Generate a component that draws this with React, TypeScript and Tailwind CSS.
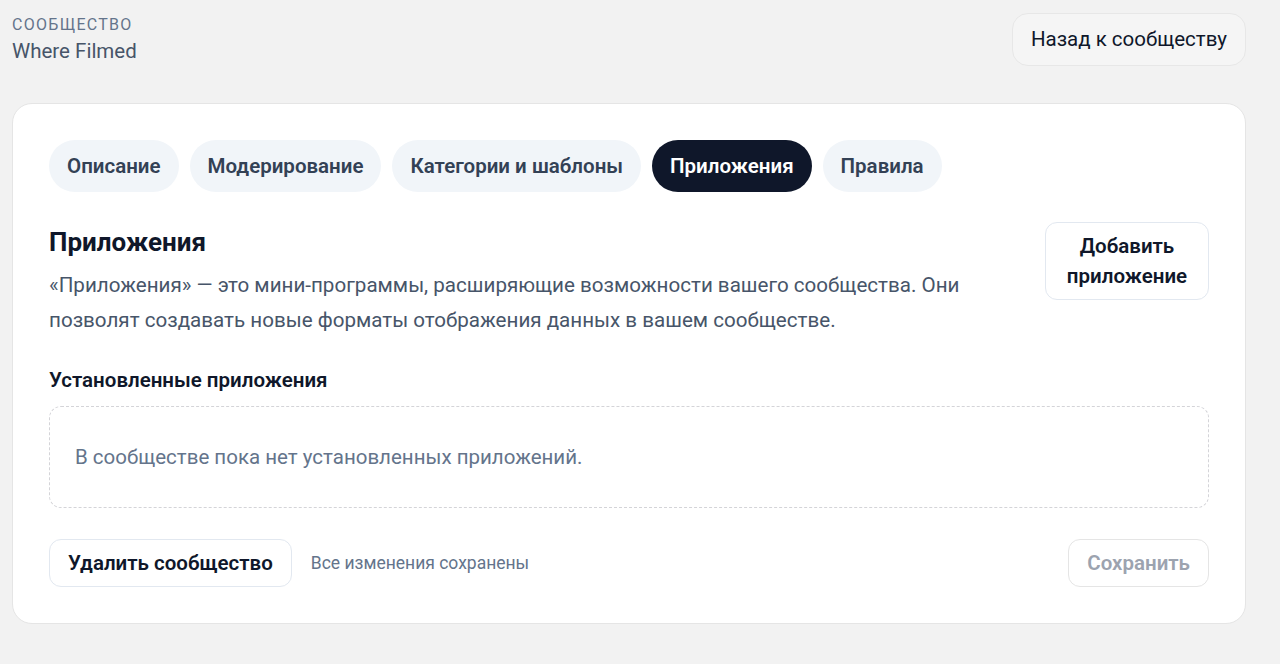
const tabs = ["Описание", "Модерирование", "Категории и шаблоны", "Приложения", "Правила"];

export default function App() {
  const active = "Приложения";

  return (
    <div className="min-h-[664px] bg-[#f2f2f2] pl-3 pr-[34px] pt-[13px] font-['Roboto',sans-serif]">
      <header className="flex items-start justify-between">
        <div className="pt-[2px]">
          <p className="text-[16px] uppercase leading-5 tracking-[0.08em] text-[#64748b]">Сообщество</p>
          <p className="mt-[2px] text-[20.5px] leading-7 text-[#475569]">Where Filmed</p>
        </div>
        <button
          type="button"
          className="h-[53px] rounded-2xl border border-[#e7e7e7] bg-[#f5f5f5] px-[18px] text-[20.5px] text-[#0f172a]"
        >
          Назад к сообществу
        </button>
      </header>

      <main className="mt-[37px] rounded-[20px] border border-[#e5e5e5] bg-white px-9 pb-9 pt-9">
        <nav className="flex gap-[11px]">
          {tabs.map((tab) => (
            <button
              key={tab}
              type="button"
              className={
                tab === active
                  ? "h-[52px] rounded-full bg-[#0f172a] px-[18px] text-[20.5px] font-semibold text-white"
                  : "h-[52px] rounded-full bg-[#f1f5f9] px-[18px] text-[20.5px] font-semibold text-[#334155]"
              }
            >
              {tab}
            </button>
          ))}
        </nav>

        <section className="mt-[30px] flex items-start justify-between gap-8">
          <div className="pt-1">
            <h2 className="text-[26px] font-bold leading-8 text-[#0f172a]">Приложения</h2>
            <p className="mt-[10px] max-w-[930px] text-[20.6px] leading-[35px] text-[#475569]">
              «Приложения» — это мини-программы, расширяющие возможности вашего сообщества. Они
              позволят создавать новые форматы отображения данных в вашем сообществе.
            </p>
          </div>
          <button
            type="button"
            className="w-[164px] shrink-0 rounded-xl border border-[#e2e8f0] bg-white py-[8px] text-[20.5px] font-semibold leading-[30px] text-[#0f172a]"
          >
            Добавить приложение
          </button>
        </section>

        <h3 className="mt-[28px] text-[20.5px] font-semibold leading-7 text-[#0f172a]">
          Установленные приложения
        </h3>
        <div className="mt-[12px] flex h-[102px] items-center rounded-xl border border-dashed border-[#d4d4d8] px-[25px]">
          <p className="text-[20.5px] text-[#64748b]">В сообществе пока нет установленных приложений.</p>
        </div>

        <footer className="mt-[31px] flex items-center justify-between">
          <div className="flex items-center gap-[19px]">
            <button
              type="button"
              className="h-12 rounded-xl border border-[#e2e8f0] bg-white px-[18px] text-[20.5px] font-semibold text-[#0f172a]"
            >
              Удалить сообщество
            </button>
            <span className="text-[17.5px] text-[#64748b]">Все изменения сохранены</span>
          </div>
          <button
            type="button"
            className="h-12 rounded-xl border border-[#e5e5e5] bg-white px-[18px] text-[20.5px] font-semibold text-[#9ca3af]"
          >
            Сохранить
          </button>
        </footer>
      </main>
    </div>
  );
}
